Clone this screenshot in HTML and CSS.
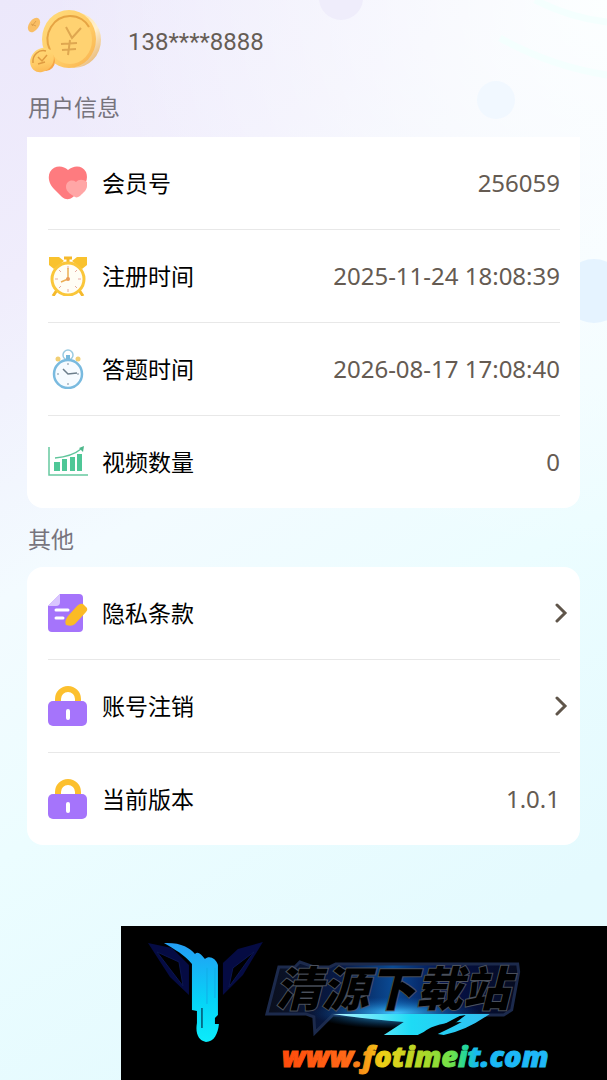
FILE: index.html
```html
<!DOCTYPE html>
<html lang="zh-CN">
<head>
  <meta charset="utf-8">
  <meta name="viewport" content="width=device-width, initial-scale=1">
  <title>用户信息</title>
  <link rel="stylesheet" href="styles.css">
</head>
<body>
  <svg class="bubbles" viewBox="0 0 607 400" aria-hidden="true">
    <circle cx="341" cy="-2" r="22" fill="#efedfb"/>
    <circle cx="496" cy="100" r="19" fill="#f1f8ff"/>
    <circle cx="594" cy="291" r="32" fill="#e5f3ff"/>
    <path d="M500 38Q550 66 607 75M535 0Q570 18 607 22" fill="none" stroke="#f4fffe" stroke-width="7"/>
  </svg>

  <main>
    <header class="user">
      <svg class="coins" viewBox="0 0 76 66" aria-hidden="true">
        <defs>
          <linearGradient id="gold" x1="0" y1="0" x2="1" y2="1">
            <stop offset="0" stop-color="#ffdc7c"/>
            <stop offset=".6" stop-color="#ffcb66"/>
            <stop offset="1" stop-color="#f8b04c"/>
          </linearGradient>
          <linearGradient id="edge" x1="0" y1="0" x2="1" y2="1">
            <stop offset="0" stop-color="#ffd675"/>
            <stop offset=".6" stop-color="#fff0cf"/>
            <stop offset="1" stop-color="#e0a557"/>
          </linearGradient>
        </defs>
        <ellipse cx="47" cy="31" rx="27" ry="28" fill="url(#edge)"/>
        <ellipse cx="42" cy="30" rx="27" ry="29" fill="url(#gold)"/>
        <ellipse cx="43" cy="31" rx="22" ry="24" fill="#ffd271"/>
        <path d="M23 41C15 25 27 7 43 7c9 0 16 5 19 11" fill="none" stroke="#e6a443" stroke-width="2"/>
        <path d="M39 18l6 11 9-10M34 35l16-1M35 41l14-1M43 31l-2 15" fill="none" stroke="#dfa750" stroke-width="2"/>
        <ellipse cx="19" cy="52" rx="9" ry="10" fill="#f7a546"/>
        <ellipse cx="15" cy="51" rx="11" ry="13" transform="rotate(40 15 51)" fill="url(#gold)"/>
        <path d="M6 54c-1-8 6-14 13-12M11 48l4 4 5-6M11 55l7-2" fill="none" stroke="#df9b40" stroke-width="1.5"/>
        <ellipse cx="7" cy="16" rx="5" ry="8" transform="rotate(35 7 16)" fill="#f9be65"/>
        <path d="M5 17l4-5M4 15l5 2" stroke="#dda04e"/>
      </svg>
      <span class="phone">138****8888</span>
    </header>

    <h2>用户信息</h2>
    <ul class="card card-info">
      <li class="row">
        <svg class="icon" viewBox="0 0 40 40" aria-hidden="true">
          <path d="M20 7C15 2 6 2 2 9c-3 6 0 13 4 17l8 8c4 3 7 3 11 0l9-9c5-5 6-11 4-16-4-7-12-7-18-2z" fill="#fe7b7f"/>
          <path d="M28 19c-4-3-10-1-10 5 0 5 6 8 9 10 2 1 3 0 5-1 3-3 7-6 7-10v-4c-4-3-8-3-11 0z" fill="#ffa6a6"/>
        </svg>
        <span class="label">会员号</span>
        <span class="value">256059</span>
      </li>
      <li class="row">
        <svg class="icon" viewBox="0 0 40 40" aria-hidden="true">
          <path d="M1 1h10l5 4-10 8-5-4zM39 1H29l-5 4 10 8 5-4z" fill="#f9c22e"/>
          <path d="M9 34l-4 6M31 34l4 6M20 7V2M16 2h8" stroke="#f5b92b" stroke-width="3"/>
          <circle cx="20" cy="23" r="16" fill="#fffdf5" stroke="#fac63a" stroke-width="3"/>
          <path d="M20 10v3M20 33v3M7 23h3M30 23h3M11 14l2 2M29 14l-2 2M11 32l2-2M29 32l-2-2" stroke="#e5aaa0"/>
          <path d="M20 12v11l-7 3" fill="none" stroke="#ecae54" stroke-width="1.5"/>
          <circle cx="20" cy="23" r="2" fill="#e99a58"/>
        </svg>
        <span class="label">注册时间</span>
        <span class="value">2025-11-24 18:08:39</span>
      </li>
      <li class="row">
        <svg class="icon" viewBox="0 0 40 40" aria-hidden="true">
          <circle cx="20" cy="6" r="5" fill="none" stroke="#9bcbe1" stroke-width="1.5"/>
          <path d="M18 6h4v5h-4z" fill="#77b9dc"/>
          <circle cx="10" cy="10" r="2.5" fill="#f1cf74"/>
          <circle cx="30" cy="10" r="2.5" fill="#f1cf74"/>
          <circle cx="20" cy="25" r="14" fill="#f6fbff" stroke="#79badf" stroke-width="2.5"/>
          <path d="M20 14v2M20 34v2M9 25h2M29 25h2" stroke="#7f91a0"/>
          <path d="M15 20l5 5 9-1" fill="none" stroke="#6c7e8b" stroke-width="1.5"/>
        </svg>
        <span class="label">答题时间</span>
        <span class="value">2026-08-17 17:08:40</span>
      </li>
      <li class="row">
        <svg class="icon" viewBox="0 0 40 40" aria-hidden="true">
          <path d="M1 5v28h39" fill="none" stroke="#67c9a0" stroke-width="1.5"/>
          <path d="M6 20h6v9H6zM14 17h5v12h-5zM22 15h5v14h-5zM29 12h5v17h-5z" fill="#4fc797"/>
          <path d="M7 16c12-1 20-4 26-9" fill="none" stroke="#60c59b" stroke-width="1.5"/>
          <path d="M31 6l5-2-1 6z" fill="#4fb78b"/>
        </svg>
        <span class="label">视频数量</span>
        <span class="value">0</span>
      </li>
    </ul>

    <h2>其他</h2>
    <ul class="card">
      <li>
        <a class="row" href="#privacy">
          <svg class="icon" viewBox="0 0 40 40" aria-hidden="true">
            <path d="M12 1h19q4 0 4 4v30q0 4-4 4H4q-4 0-4-4V13z" fill="#a574fb"/>
            <path d="M12 1v8q0 4-4 4H0z" fill="#d9c5ff"/>
            <path d="M8 17h12M8 25h7" stroke="#fff" stroke-width="3" stroke-linecap="round"/>
            <path d="M20 23l9-10q3-3 6-2l4 4q1 2-1 4L27 31q-3 3-9 1-2-4 2-9z" fill="#fbbb25"/>
          </svg>
          <span class="label">隐私条款</span>
          <svg class="arrow" viewBox="0 0 13 20" aria-hidden="true"><path d="M2 2l8 8-8 8"/></svg>
        </a>
      </li>
      <li>
        <a class="row" href="#cancel">
          <svg class="icon" viewBox="0 0 40 40" aria-hidden="true">
            <path d="M10 19v-6a10 10 0 0 1 20 0v6" fill="none" stroke="#fcc02e" stroke-width="6"/>
            <rect x="0" y="15" width="39" height="25" rx="5" fill="#a574fb"/>
            <path d="M20 25v7" stroke="#fff" stroke-width="4" stroke-linecap="round"/>
          </svg>
          <span class="label">账号注销</span>
          <svg class="arrow" viewBox="0 0 13 20" aria-hidden="true"><path d="M2 2l8 8-8 8"/></svg>
        </a>
      </li>
      <li class="row">
        <svg class="icon" viewBox="0 0 40 40" aria-hidden="true">
          <path d="M10 19v-6a10 10 0 0 1 20 0v6" fill="none" stroke="#fcc02e" stroke-width="6"/>
          <rect x="0" y="15" width="39" height="25" rx="5" fill="#a574fb"/>
          <path d="M20 25v7" stroke="#fff" stroke-width="4" stroke-linecap="round"/>
        </svg>
        <span class="label">当前版本</span>
        <span class="value">1.0.1</span>
      </li>
    </ul>
  </main>

  <aside class="banner">
    <svg class="banner-art" viewBox="0 0 486 154" aria-hidden="true">
      <defs>
        <linearGradient id="drip" x1="0" y1="0" x2="0" y2="1">
          <stop offset="0" stop-color="#239df4"/>
          <stop offset=".6" stop-color="#06d5f7"/>
          <stop offset="1" stop-color="#0cecfb"/>
        </linearGradient>
        <linearGradient id="plate">
          <stop offset="0" stop-color="#0b0f1c"/>
          <stop offset=".3" stop-color="#071a48"/>
          <stop offset=".5" stop-color="#0a4a94"/>
          <stop offset=".7" stop-color="#04124c"/>
          <stop offset="1" stop-color="#060b1e"/>
        </linearGradient>
        <radialGradient id="glow">
          <stop offset="0" stop-color="#3fc4ff"/>
          <stop offset="1" stop-color="#0a5fb8" stop-opacity="0"/>
        </radialGradient>
        <linearGradient id="swoosh">
          <stop offset="0" stop-color="#b0f5ff"/>
          <stop offset=".5" stop-color="#1edbf5"/>
          <stop offset="1" stop-color="#32bdf2"/>
        </linearGradient>
        <linearGradient id="rainbow" gradientUnits="userSpaceOnUse" x1="161" y1="0" x2="424" y2="0">
          <stop offset="0" stop-color="#ff4a0b"/>
          <stop offset=".26" stop-color="#ff6a18"/>
          <stop offset=".38" stop-color="#f0cf16"/>
          <stop offset=".55" stop-color="#a7d92a"/>
          <stop offset=".65" stop-color="#6be24d"/>
          <stop offset=".7" stop-color="#20d6a0"/>
          <stop offset=".74" stop-color="#18b8f4"/>
          <stop offset="1" stop-color="#20b8f8"/>
        </linearGradient>
      </defs>
      <path d="M27 17l24 5 17 17v30L49 51zM142 16l-25 7-15 14v32l20-20z" fill="#050b43"/>
      <path d="M36 26l22 10 4 24zM133 26l-21 16-4 19z" fill="#000" stroke="#0b1650"/>
      <path d="M46 17c15 0 23 5 28 11 3-3 6 0 10 5 4-4 11-1 13 6v50l-3 3v6h4c-1 10-5 18-13 18-7-1-11-8-9-19V85l-5-1V38c-7-9-18-15-28-21z" fill="url(#drip)"/>
      <path d="M81 82v20" stroke="#03506e" stroke-width="1.5"/>
      <path d="M86 42v36M94 42v30" stroke="#12aee8"/>
      <path d="M158 41h16l5-5 14 5h16l6-3h182l1 8-7 38-8 5H212l-18 18-1-16-8-3h-39z" fill="url(#plate)" stroke="#1c2a4c" stroke-width="3"/>
      <ellipse cx="275" cy="87" rx="85" ry="16" fill="url(#glow)"/>
      <path d="M212 88h157q-24 17-46 21l-6-1q15-7 24-12-25 0-38 10l-6 3h-34l20-13q-40-3-71-8z" fill="url(#swoosh)"/>
      <path d="M303 108q18-8 36-18l6-1q-14 12-31 20z" fill="#000"/>
      <text class="banner-title" x="154" y="80">清源下载站</text>
      <text class="banner-url" x="161" y="141" fill="url(#rainbow)" stroke="url(#rainbow)">www.fotimeit.com</text>
    </svg>
  </aside>
</body>
</html>
```
FILE: styles.css
```css
* {
  box-sizing: border-box;
}

body {
  position: relative;
  margin: 0;
  min-height: 100vh;
  overflow-x: hidden;
  font-family: "Noto Sans", "Noto Sans CJK SC", sans-serif;
  color: #000;
  background:
    radial-gradient(circle at 100% 0, #fcffff 0, rgba(252, 255, 255, 0) 45%),
    linear-gradient(150deg, #ece8fb 0%, #f0edfc 20%, #f3fbff 42%, #ecfdff 60%, #e4fafe 85%, #e4faff 100%);
}

.bubbles {
  position: absolute;
  top: 0;
  left: 0;
  width: 100%;
}

main {
  position: relative;
  padding: 8px 27px 0;
}

.user {
  display: flex;
  align-items: center;
  gap: 25px;
  height: 68px;
}

.coins {
  width: 76px;
  height: 66px;
}

.phone {
  font-family: Roboto, sans-serif;
  font-size: 24px;
  color: #665d55;
}

h2 {
  margin: 0;
  height: 59px;
  padding: 0 1px;
  font-size: 23px;
  font-weight: 400;
  line-height: 63px;
  color: #77747d;
}

.card {
  margin: 0;
  padding: 0 20px 0 21px;
  list-style: none;
  background: #fff;
  border-radius: 16px;
}

.card-info {
  margin-top: 2px;
  border-radius: 0 0 16px 16px;
}

.row {
  display: flex;
  align-items: center;
  height: 93px;
  border-bottom: 1px solid #e8e8e8;
  color: inherit;
  text-decoration: none;
}

li.row:last-child {
  height: 92px;
  border-bottom: 0;
}

.icon {
  width: 40px;
  height: 40px;
  margin-right: 14px;
}

.label {
  flex: 1;
  font-size: 23px;
  line-height: 32px;
}

.value {
  font-size: 24px;
  line-height: 32px;
  color: #655b52;
}

.arrow {
  width: 13px;
  height: 20px;
  margin-right: -8px;
  fill: none;
  stroke: #5f554a;
  stroke-width: 3;
  stroke-linecap: round;
}

.banner {
  position: absolute;
  right: 0;
  bottom: 0;
  width: 80%;
  background: #000;
}

.banner-art {
  display: block;
  width: 100%;
}

.banner-title {
  font: italic 900 47px "Noto Sans CJK SC", sans-serif;
  fill: #000;
  stroke: #4a505c;
  stroke-width: 2px;
  paint-order: stroke;
}

.banner-url {
  font: italic 800 29px "Open Sans", sans-serif;
  stroke-width: 1px;
}
```
